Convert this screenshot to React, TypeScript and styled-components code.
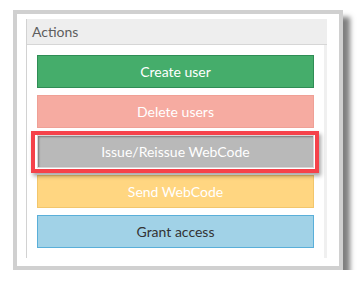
import styled, { createGlobalStyle } from 'styled-components';

const GlobalStyle = createGlobalStyle`
  body {
    margin: 0;
    background: #ffffff;
    font-family: Lato, 'Open Sans', sans-serif;
  }
`;

const Page = styled.div`
  padding: 10px 0 0 13px;
`;

const Frame = styled.div`
  width: 330px;
  height: 260px;
  box-sizing: border-box;
  border: 4px solid #d0d0d0;
  padding: 5px 12px 8px 9px;
  background: #ffffff;
  box-shadow: 7px 7px 5px rgba(0, 0, 0, 0.5);
`;

const Panel = styled.div`
  height: 100%;
  display: flex;
  flex-direction: column;
  border-left: 1px solid #d2d2d2;
`;

const PanelHeader = styled.div`
  height: 25px;
  display: flex;
  align-items: center;
  padding-left: 5px;
  background: #eeeeee;
  border-bottom: 1px solid #d6d6d6;
  color: #5e5e5e;
  font-size: 14px;
`;

const PanelBody = styled.div`
  flex: 1;
  display: flex;
  flex-direction: column;
  gap: 7px;
  padding: 10px 10px 9px 10px;
  border-right: 3px solid #f0f0f0;
`;

const variants = {
  green: { bg: '#45ad6b', border: '#2f8d55', color: '#ffffff' },
  pink: { bg: '#f6aba1', border: '#efa096', color: '#ffffff' },
  gray: { bg: '#b9b9b9', border: '#d8d8d8', color: '#ffffff' },
  yellow: { bg: '#ffd681', border: '#f2c66c', color: '#ffffff' },
  blue: { bg: '#a1d2e7', border: '#5aafd9', color: '#333333' },
};

type Variant = keyof typeof variants;

const ActionButton = styled.button<{ $variant: Variant }>`
  width: 100%;
  height: 33px;
  box-sizing: border-box;
  border: 1px solid ${({ $variant }) => variants[$variant].border};
  background: ${({ $variant }) => variants[$variant].bg};
  color: ${({ $variant }) => variants[$variant].color};
  font-family: Lato, 'Open Sans', sans-serif;
  font-size: 14px;
  padding: 0;
  cursor: pointer;
`;

const Highlighted = styled.div`
  position: relative;
  height: 33px;

  ${ActionButton} {
    box-shadow: inset 1px 1px 2px rgba(0, 0, 0, 0.35);
  }

  &::after {
    content: '';
    position: absolute;
    top: -4px;
    left: -6px;
    right: -5px;
    bottom: -5px;
    border: 4px solid #f5424a;
    box-shadow: 2px 3px 4px rgba(0, 0, 0, 0.35);
    pointer-events: none;
  }
`;

export default function App() {
  return (
    <Page>
      <GlobalStyle />
      <Frame>
        <Panel>
          <PanelHeader>Actions</PanelHeader>
          <PanelBody>
            <ActionButton $variant="green">Create user</ActionButton>
            <ActionButton $variant="pink">Delete users</ActionButton>
            <Highlighted>
              <ActionButton $variant="gray">Issue/Reissue WebCode</ActionButton>
            </Highlighted>
            <ActionButton $variant="yellow">Send WebCode</ActionButton>
            <ActionButton $variant="blue">Grant access</ActionButton>
          </PanelBody>
        </Panel>
      </Frame>
    </Page>
  );
}
